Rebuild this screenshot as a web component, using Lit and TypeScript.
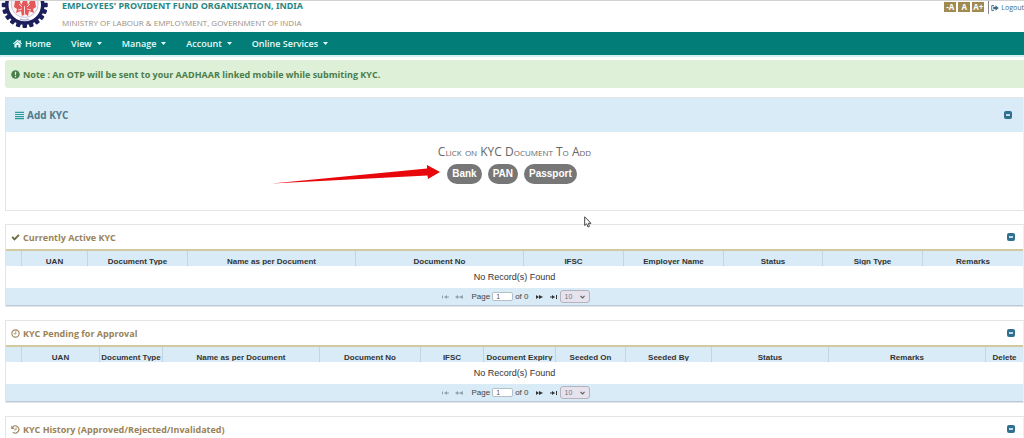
import { LitElement, html, css, svg } from "lit";
import { customElement, property } from "lit/decorators.js";

interface Column {
  label: string;
  width: number;
}

const ACTIVE_COLUMNS: Column[] = [
  { label: "", width: 16 },
  { label: "UAN", width: 66 },
  { label: "Document Type", width: 100 },
  { label: "Name as per Document", width: 168 },
  { label: "Document No", width: 168 },
  { label: "IFSC", width: 100 },
  { label: "Employer Name", width: 100 },
  { label: "Status", width: 99 },
  { label: "Sign Type", width: 100 },
  { label: "Remarks", width: 100 },
];

const PENDING_COLUMNS: Column[] = [
  { label: "", width: 16 },
  { label: "UAN", width: 78 },
  { label: "Document Type", width: 63 },
  { label: "Name as per Document", width: 157 },
  { label: "Document No", width: 101 },
  { label: "IFSC", width: 63 },
  { label: "Document Expiry", width: 72 },
  { label: "Seeded On", width: 70 },
  { label: "Seeded By", width: 86 },
  { label: "Status", width: 117 },
  { label: "Remarks", width: 157 },
  { label: "Delete", width: 37 },
];

const homeIcon = svg`<path d="M8 1 0 8 1.300 9.500 8 3.800 14.700 9.500 16 8 13.800 6.100V2H11.300V4Z M8 5 2.500 9.700V15H6.500V10.500H9.500V15H13.500V9.700Z" fill="currentColor"/>`;
const infoIcon = svg`<circle cx="8" cy="8" r="7.600" fill="currentColor"/><path d="M6.700 3h2.600l-.4 6H7.100z M6.900 10.400h2.200v2.300H6.900z" fill="#dff0d8"/>`;
const listIcon = svg`<path d="M0 1.500h16v2H0z M0 5.200h16v2H0z M0 8.900h16v2H0z M0 12.600h16v2H0z" fill="#2a9d9a"/>`;
const checkIcon = svg`<path d="M.8 8.200 3.200 5.800 6.200 8.700 13 2.300 15.300 4.600 6.200 13.600Z" fill="#6f6c45"/>`;
const clockIcon = svg`<circle cx="8" cy="8" r="6.500" fill="none" stroke="currentColor" stroke-width="2"/><path d="M8.500 4v4.700H4.800" fill="none" stroke="currentColor" stroke-width="1.500"/>`;
const historyIcon = svg`<path d="M3 3.600A6.300 6.300 0 1 1 3.200 12.600" fill="none" stroke="currentColor" stroke-width="2"/><path d="M0.500 1v6h6z" fill="currentColor"/><path d="M9 4.500v4.200H5.800" fill="none" stroke="currentColor" stroke-width="1.500"/>`;
const logoutIcon = svg`<path d="M6 3H1.500v10H6" fill="none" stroke="currentColor" stroke-width="1.800"/><path d="M4.500 5.500H9V2.500l6.500 5.500L9 13.500v-3H4.500z" fill="currentColor"/>`;

const icon = (shape: unknown) =>
  html`<svg class="icon" viewBox="0 0 16 16" aria-hidden="true">${shape}</svg>`;

@customElement("kyc-toggle")
class KycToggle extends LitElement {
  static styles = css`
    :host {
      display: flex;
    }
    .toggle {
      display: flex;
      padding: 0;
      border: 0;
      background: none;
      color: #2f6f8f;
    }
    .glyph {
      width: 8px;
      height: 8px;
    }
  `;

  render() {
    return html`<button class="toggle" type="button" aria-label="Collapse">
      <svg class="glyph" viewBox="0 0 8 8">
        <rect width="8" height="8" rx="2" fill="currentColor" />
        <rect x="2" y="3" width="4" height="2" fill="#c3dbe6" />
      </svg>
    </button>`;
  }
}

@customElement("kyc-grid")
class KycGrid extends LitElement {
  @property({ attribute: false }) columns: Column[] = [];

  static styles = css`
    :host {
      display: block;
      font-family: "Liberation Sans", Arial, sans-serif;
      color: #333;
    }
    .grid {
      width: 100%;
      table-layout: fixed;
      border-collapse: separate;
      border-spacing: 0;
    }
    .head {
      padding: 0 0 1px;
      border-right: 1px solid #c3d6e0;
      background: #d9ebf6;
      font-size: 8px;
      font-weight: 700;
    }
    .head:last-child {
      border-right: 0;
    }
    .label {
      height: 14px;
      box-sizing: border-box;
      padding-top: 6px;
      line-height: 9px;
      overflow: hidden;
      white-space: nowrap;
      text-align: center;
    }
    .empty {
      height: 22px;
      padding: 0;
      background: #fff;
      font-size: 9px;
      line-height: 22px;
      text-align: center;
    }
    .pager {
      display: flex;
      align-items: center;
      justify-content: center;
      height: 17px;
      padding-left: 2px;
      border-bottom: 1px solid #b9ccd6;
      background: #d9ebf6;
      font-size: 8px;
      color: #444;
    }
    .step {
      display: flex;
      padding: 0;
      margin-right: 5px;
      border: 0;
      background: none;
      color: #333;
    }
    .step:last-of-type {
      margin-right: 2px;
    }
    .step:disabled {
      color: #8fa3ae;
    }
    .arrow {
      width: 9px;
      height: 6px;
    }
    .page {
      display: flex;
      align-items: center;
      gap: 2px;
      margin: 0 6px 0 2px;
    }
    .number {
      box-sizing: border-box;
      width: 21px;
      height: 9px;
      padding: 0 3px;
      border: 1px solid #b5bfc5;
      border-radius: 2px;
      background: #fff;
      color: #555;
      font: 7px "Liberation Sans", Arial, sans-serif;
    }
    .sizes {
      display: grid;
      align-items: center;
    }
    .select {
      grid-area: 1 / 1;
      box-sizing: border-box;
      width: 30px;
      height: 13px;
      padding: 0 4px;
      border: 1px solid #b4b2bb;
      border-radius: 3px;
      appearance: none;
      background: #e6e3ee;
      color: #777;
      font: 7px "Liberation Sans", Arial, sans-serif;
    }
    .chevron {
      grid-area: 1 / 1;
      justify-self: end;
      width: 5px;
      height: 4px;
      margin-right: 5px;
      pointer-events: none;
    }
  `;

  private step(label: string, shape: unknown, disabled: boolean) {
    return html`<button
      class="step"
      type="button"
      aria-label=${label}
      ?disabled=${disabled}
    >
      <svg class="arrow" viewBox="0 0 9 6">${shape}</svg>
    </button>`;
  }

  render() {
    const total = this.columns.reduce((sum, c) => sum + c.width, 0);
    return html`
      <table class="grid">
        <colgroup>
          ${this.columns.map(
            (c) => html`<col style="width:${(c.width / total) * 100}%" />`
          )}
        </colgroup>
        <thead>
          <tr>
            ${this.columns.map(
              (c) =>
                html`<th class="head"><div class="label">${c.label}</div></th>`
            )}
          </tr>
        </thead>
        <tbody>
          <tr>
            <td class="empty" colspan=${this.columns.length}>
              No Record(s) Found
            </td>
          </tr>
        </tbody>
      </table>
      <div class="pager">
        ${this.step(
          "First page",
          svg`<path d="M1 1.500h1v3H1z M3 3l3-2v1.500h2v1H6V5z" fill="currentColor"/>`,
          true
        )}
        ${this.step(
          "Previous page",
          svg`<path d="M0 3l3-2v1.500h2L8 1v4L5 3.500H3V5z" fill="currentColor"/>`,
          true
        )}
        <label class="page"
          >Page <input class="number" type="text" .value=${"1"} /> of 0</label
        >
        ${this.step(
          "Next page",
          svg`<path d="M1 1l3 2V1l4 2-4 2V3L1 5z" fill="currentColor"/>`,
          false
        )}
        ${this.step(
          "Last page",
          svg`<path d="M1 2.500h2V1l3 2-3 2V3.500H1z M7 1h1v4H7z" fill="currentColor"/>`,
          false
        )}
        <div class="sizes">
          <select class="select" aria-label="Rows per page">
            <option>10</option>
          </select>
          <svg class="chevron" viewBox="0 0 5 4" aria-hidden="true">
            <path
              d="M.5 .8 2.500 3 4.500 .8"
              fill="none"
              stroke="#555"
              stroke-width="1.100"
            />
          </svg>
        </div>
      </div>
    `;
  }
}

@customElement("app-root")
class AppRoot extends LitElement {
  static styles = css`
    :host {
      display: block;
      position: relative;
      height: 100vh;
      overflow: hidden;
      background: #fff;
      font-family: "Open Sans", "Noto Sans", sans-serif;
      color: #444;
    }
    .icon {
      flex: none;
      width: 9px;
      height: 9px;
    }
    .masthead {
      display: flex;
      align-items: flex-start;
      justify-content: space-between;
      box-sizing: border-box;
      height: 32px;
      border-top: 1px solid #d2d2d2;
      overflow: hidden;
    }
    .brand {
      display: flex;
      gap: 14px;
      padding-left: 1px;
    }
    .logo {
      width: 47px;
      height: 28px;
    }
    .org {
      margin: 0;
      font-family: "Noto Sans", sans-serif;
      font-size: 9px;
      line-height: 9px;
      font-weight: 700;
      color: #2b8783;
      white-space: nowrap;
    }
    .ministry {
      margin: 0;
      padding-top: 8px;
      font-size: 8px;
      line-height: 10px;
      color: #9a8e80;
      white-space: nowrap;
    }
    .tools {
      display: flex;
      flex: none;
      align-items: flex-start;
    }
    .size {
      width: 12px;
      height: 10px;
      margin: 1px 2px 0 0;
      padding: 0;
      border: 0;
      background: #a08a50;
      color: #fff;
      font: 700 8px/10px "Open Sans", sans-serif;
      text-align: center;
      flex: none;
    }
    .logout {
      display: flex;
      flex: none;
      align-items: center;
      gap: 2px;
      height: 13px;
      margin-left: 2px;
      padding-left: 2px;
      border-left: 1px solid #8a8a8a;
      font-size: 7px;
      color: #3b6f86;
      text-decoration: none;
    }
    .logout .icon {
      width: 8px;
      height: 8px;
    }
    .nav {
      display: flex;
      gap: 20px;
      height: 23px;
      padding-left: 13px;
      border-bottom: 2px solid #d5f1f3;
      background: #027d78;
      background-clip: padding-box;
    }
    .link {
      display: flex;
      align-items: center;
      gap: 3px;
      padding-bottom: 1px;
      font-size: 9px;
      font-weight: 600;
      color: #e6fbf8;
      text-decoration: none;
    }
    .caret {
      width: 5px;
      height: 3px;
      margin-left: 2px;
    }
    .content {
      display: flex;
      flex-direction: column;
      padding: 3px 0 0 5px;
    }
    .note {
      display: flex;
      align-items: center;
      gap: 3px;
      height: 28px;
      margin-bottom: 9px;
      padding-left: 6px;
      border-radius: 3px 0 0 3px;
      background: #dff0d8;
      font-size: 9px;
      font-weight: 700;
      color: #4a7d4a;
    }
    .panel {
      margin-bottom: 13px;
      border: 1px solid #e2e4e6;
      border-right-color: #eeeeee;
    }
    .bar {
      display: flex;
      align-items: center;
      gap: 3px;
      height: 24px;
      padding: 0 8px 0 5px;
      border-bottom: 2px solid #d3c8a1;
      color: #9a8358;
    }
    .bar.blue {
      height: 34px;
      padding: 0 11px 0 9px;
      border-bottom: 0;
      background: #d9ebf6;
      color: #31708f;
    }
    .title {
      flex: 1;
      margin: 0;
      font-size: 9px;
      font-weight: 700;
    }
    .blue .title {
      font-size: 10px;
      color: #4f7a8e;
    }
    .documents {
      display: flex;
      flex-direction: column;
      align-items: center;
      height: 64px;
      padding-top: 14px;
    }
    .prompt {
      margin: 0;
      font-size: 12px;
      line-height: 12px;
      font-weight: 400;
      font-variant: small-caps;
      color: #666;
    }
    .pills {
      position: relative;
      display: flex;
      gap: 6px;
      margin: 6px 5px 0 0;
    }
    .pill {
      height: 20px;
      padding: 0 5px;
      border: 0;
      border-radius: 10px;
      background: #777;
      color: #fff;
      font: 700 10px/20px "Liberation Sans", Arial, sans-serif;
    }
    .pointer {
      position: absolute;
      right: 100%;
      top: 0;
      width: 168px;
      height: 22px;
      margin-right: 7px;
    }
    .cursor {
      position: absolute;
      left: 57%;
      top: 216px;
      width: 8px;
      height: 12px;
    }
  `;

  private renderLogo() {
    const teeth = Array.from({ length: 20 }, (_, i) => i * 18);
    return html`<svg class="logo" viewBox="0 0 47 28" role="img" aria-label="EPFO">
      ${teeth.map(
        (a) =>
          svg`<rect x="21.500" y="22.500" width="4.500" height="4.500" rx="1" fill="#1d1f5c" transform="rotate(${a} 23.750 4)"/>`
      )}
      <circle cx="23.750" cy="4" r="18" fill="#fff" stroke="#1d1f5c" stroke-width="3.500" />
      <circle cx="23.750" cy="3" r="13.500" fill="#fbf2f3" stroke="#c5c6dc" stroke-width="1" />
      <path d="M14 0h5l1 4 2-4h4l1 4 2-4h5l1 6-3 2 1 4-5-2-1 5-3-2-3 2-1-5-5 2 1-4-3-2z" fill="#e4575a" />
      <path d="M18 3l3 3M29 3l-3 3M23.500 5v8M17 9l4-1M30 9l-4-1" stroke="#fbd9d8" stroke-width="1" />
      <path d="M19 18q4.500 2 9 0" fill="none" stroke="#b4b6d0" stroke-width="1.500" />
    </svg>`;
  }

  private renderBar(shape: unknown, title: string, tone = "") {
    return html`<header class="bar ${tone}">
      ${icon(shape)}
      <h2 class="title">${title}</h2>
      <kyc-toggle></kyc-toggle>
    </header>`;
  }

  render() {
    const menus = ["View", "Manage", "Account", "Online Services"];
    return html`
      <header class="masthead">
        <div class="brand">
          ${this.renderLogo()}
          <div>
            <h1 class="org">EMPLOYEES' PROVIDENT FUND ORGANISATION, INDIA</h1>
            <p class="ministry">
              MINISTRY OF LABOUR &amp; EMPLOYMENT, GOVERNMENT OF INDIA
            </p>
          </div>
        </div>
        <div class="tools">
          <button class="size" type="button">-A</button>
          <button class="size" type="button">A</button>
          <button class="size" type="button">A+</button>
          <a class="logout" href="#">${icon(logoutIcon)}Logout</a>
        </div>
      </header>
      <nav class="nav">
        <a class="link" href="#">${icon(homeIcon)}Home</a>
        ${menus.map(
          (m) => html`<a class="link" href="#"
            >${m}<svg class="caret" viewBox="0 0 5 3" aria-hidden="true">
              <path d="M0 0h5L2.500 3z" fill="currentColor" /></svg
          ></a>`
        )}
      </nav>
      <main class="content">
        <div class="note" role="alert">
          ${icon(infoIcon)}
          <span
            >Note : An OTP will be sent to your AADHAAR linked mobile while
            submiting KYC.</span
          >
        </div>
        <section class="panel">
          ${this.renderBar(listIcon, "Add KYC", "blue")}
          <div class="documents">
            <p class="prompt">Click on KYC Document To Add</p>
            <div class="pills">
              <svg class="pointer" viewBox="0 0 168 22" aria-hidden="true">
                <path
                  d="M0 19.500 155 4.500 155 1 168 8 156 15 155.500 11.500Z"
                  fill="#e8080c"
                />
              </svg>
              <button class="pill" type="button">Bank</button>
              <button class="pill" type="button">PAN</button>
              <button class="pill" type="button">Passport</button>
            </div>
          </div>
        </section>
        <section class="panel">
          ${this.renderBar(checkIcon, "Currently Active KYC")}
          <kyc-grid .columns=${ACTIVE_COLUMNS}></kyc-grid>
        </section>
        <section class="panel">
          ${this.renderBar(clockIcon, "KYC Pending for Approval")}
          <kyc-grid .columns=${PENDING_COLUMNS}></kyc-grid>
        </section>
        <section class="panel">
          ${this.renderBar(
            historyIcon,
            "KYC History (Approved/Rejected/Invalidated)"
          )}
        </section>
      </main>
      <svg class="cursor" viewBox="0 0 8 12" aria-hidden="true">
        <path
          d="M.7 .8V9.500L2.700 7.800 4 11 5.500 10.300 4.300 7.300H7Z"
          fill="#fff"
          stroke="#444"
          stroke-width="1"
        />
      </svg>
    `;
  }
}
